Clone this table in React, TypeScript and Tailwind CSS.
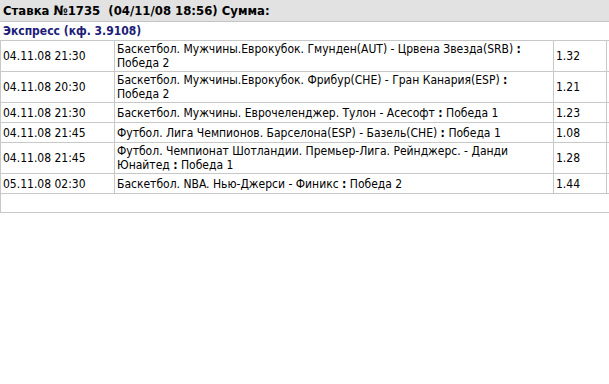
import React from "react";

const rows: { d: string; t: string; k: string }[] = [
  { d: "04.11.08 21:30", t: "Баскетбол. Мужчины.Еврокубок. Гмунден(AUT) - Црвена Звезда(SRB) : Победа 2", k: "1.32" },
  { d: "04.11.08 20:30", t: "Баскетбол. Мужчины.Еврокубок. Фрибур(CHE) - Гран Канария(ESP) : Победа 2", k: "1.21" },
  { d: "04.11.08 21:30", t: "Баскетбол. Мужчины. Еврочеленджер. Тулон - Асесофт : Победа 1", k: "1.23" },
  { d: "04.11.08 21:45", t: "Футбол. Лига Чемпионов. Барселона(ESP) - Базель(CHE) : Победа 1", k: "1.08" },
  { d: "04.11.08 21:45", t: "Футбол. Чемпионат Шотландии. Премьер-Лига. Рейнджерс. - Данди Юнайтед : Победа 1", k: "1.28" },
  { d: "05.11.08 02:30", t: "Баскетбол. NBA. Нью-Джерси - Финикс : Победа 2", k: "1.44" },
];

function Desc({ t }: { t: string }) {
  const i = t.lastIndexOf(" : ");
  return (
    <span>
      {t.slice(0, i)} <b className="font-bold">:</b> {t.slice(i + 3)}
    </span>
  );
}

export default function App() {
  return (
    <div className="w-[609px] h-[384px] bg-white text-black font-['DejaVu_Sans_Condensed','DejaVu_Sans',sans-serif] text-[12px] leading-[14px] overflow-hidden">
      <div className="h-[22px] bg-[#e2e2e2] border-b border-[#c4c4c4] flex items-center px-[3px] text-[13px] font-bold whitespace-pre">
        Ставка №1735  (04/11/08 18:56) Сумма:
      </div>
      <div className="h-[19px] border-b border-[#c8c8c8] flex items-center px-[3px] font-bold text-[#1c1c78]">
        Экспресс (кф. 3.9108)
      </div>
      <div className="border-l border-[#c8c8c8]">
        {rows.map((r, idx) => (
          <div key={idx} className="flex min-h-[20px] border-b border-[#c8c8c8]">
            <div className="w-[114px] shrink-0 border-r border-[#c8c8c8] flex items-center px-[2px] py-[1px]">
              {r.d}
            </div>
            <div className="w-[439px] shrink-0 border-r border-[#c8c8c8] flex items-center px-[2px] py-[1px]">
              <Desc t={r.t} />
            </div>
            <div className="w-[53px] shrink-0 border-r border-[#c8c8c8] flex items-center px-[2px] py-[1px]">
              {r.k}
            </div>
            <div className="flex-1" />
          </div>
        ))}
        <div className="h-[19px] border-b border-[#c8c8c8]" />
      </div>
    </div>
  );
}
